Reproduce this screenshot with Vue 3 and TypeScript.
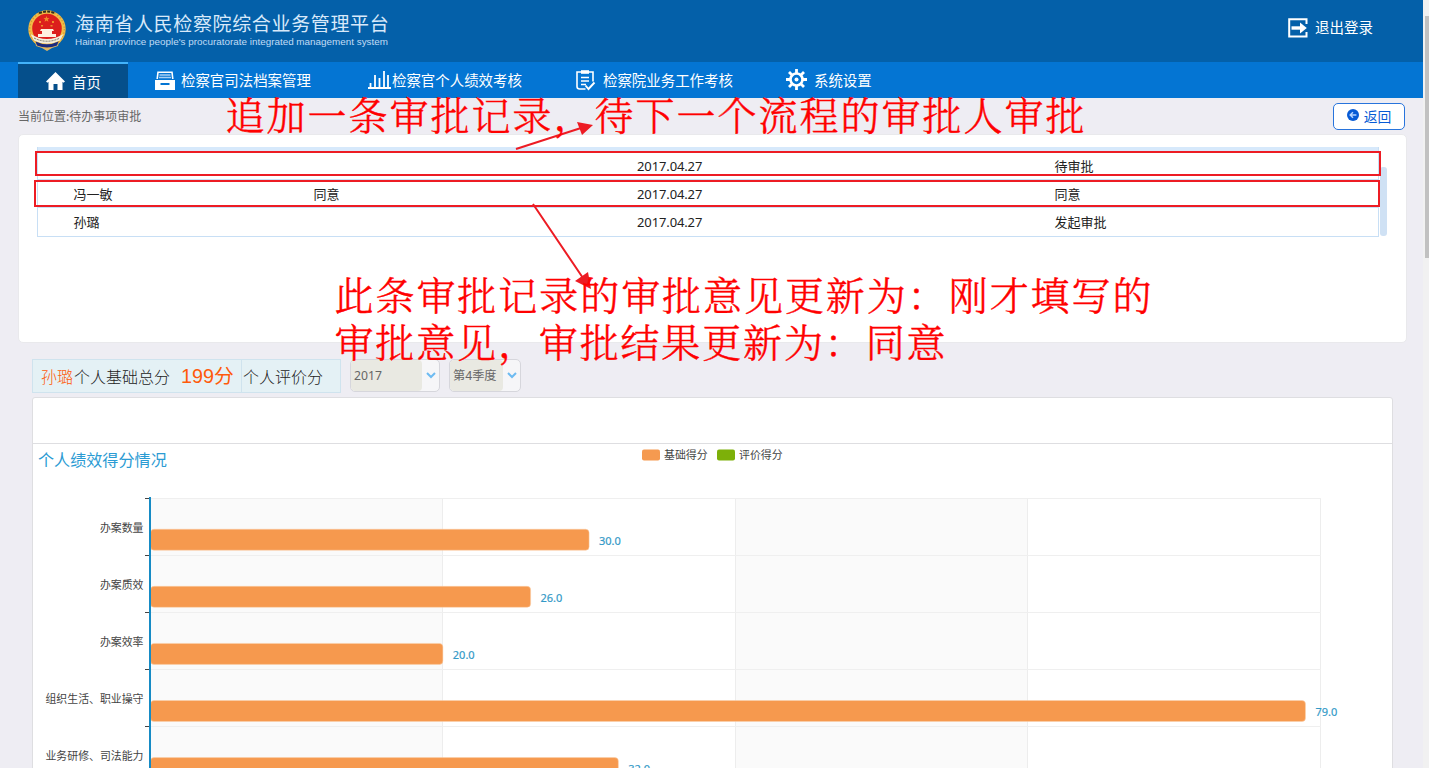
<script setup lang="ts">
interface Bar { label: string; value: number; y: number }

const approvals = [
  { name: '', opinion: '', date: '2017.04.27', result: '待审批' },
  { name: '冯一敏', opinion: '同意', date: '2017.04.27', result: '同意' },
  { name: '孙璐', opinion: '', date: '2017.04.27', result: '发起审批' },
]

const labels: [string, number][] = [
  ['办案数量', 30],
  ['办案质效', 26],
  ['办案效率', 20],
  ['组织生活、职业操守', 79],
  ['业务研修、司法能力', 32],
]
const rowHeight = 57.1
const unit = 14.62
const bars: Bar[] = labels.map(([label, value], i) => ({ label, value, y: 54 + i * rowHeight }))
const lines = [0, 1, 2, 3, 4].map((i) => Math.round(54 + i * rowHeight) + 0.5)
</script>

<template>
  <div class="page">
    <div class="main">
      <header class="top">
        <svg class="emblem" width="40" height="42" viewBox="0 0 40 42">
          <path d="M7 27 L9 36 L15 38 L20 41 L25 38 L31 36 L33 27Z" fill="#e0b563" />
          <circle cx="20" cy="19" r="18.7" fill="#f2bd45" />
          <circle cx="20" cy="19" r="17.3" fill="none" stroke="#d39a3a" stroke-width="1.4" stroke-dasharray="1.4 2" />
          <path d="M12 3.2Q20 -.2 28 3.2" fill="none" stroke="#37301c" stroke-width="2" stroke-dasharray="3 1.2" />
          <circle cx="20" cy="18.5" r="14.8" fill="#dc1f1c" />
          <path d="m19.5 6 .8 2.1 2.2.1-1.7 1.4.6 2.2-1.9-1.2-1.9 1.2.6-2.2-1.7-1.4 2.2-.1z" fill="#f08a2b" />
          <path d="M12 11h2v2h-2zM25 11h2v2h-2zM14 15h2v1.6h-2zM23.5 15h2v1.6h-2z" fill="#f08a2b" />
          <path d="M14 19h12l1 2H13zM15 21h10v3h4v3H11v-3h4z" fill="#fff0df" />
          <path d="M3.5 24Q20 34 36.5 24L33 30.5Q20 37 7 30.5Z" fill="#f4eedb" />
          <path d="M7 28Q20 34.5 33 28" fill="none" stroke="#7b7569" stroke-dasharray="2 1" />
          <path d="M8.5 31.5Q20 37 31.5 31.5L30 35.5Q20 39.5 10 35.5Z" fill="#1c2b80" />
        </svg>
        <div class="brand">
          <h1>海南省人民检察院综合业务管理平台</h1>
          <svg class="english" width="316" height="14">
            <text x="0" y="8.5" textLength="313" lengthAdjust="spacingAndGlyphs">Hainan province people's procuratorate integrated management system</text>
          </svg>
        </div>
        <a class="logout">
          <svg width="20" height="20" viewBox="0 0 20 20" fill="none" stroke="#fff" stroke-width="2">
            <path d="M18.5 6V1.2H1.2v17.2h17.3V14" />
            <path d="M3.5 10H13" stroke-width="3.4" />
            <path d="M12 4.5 18.8 10 12 15.5z" fill="#fff" stroke="none" />
          </svg>
          <span>退出登录</span>
        </a>
      </header>

      <nav>
        <a class="tab home">
          <svg width="19" height="19" viewBox="0 0 19 19"><path d="M9.5 0 19 9.5l-1.5 1.3-1-1V18h-5v-6h-4v6h-5V9.8l-1 1L0 9.5z" fill="#fff" /></svg>
          <span>首页</span>
        </a>
        <a class="tab archive">
          <svg width="20" height="20" viewBox="0 0 20 20">
            <path d="M2.2 8 3 1.2h14L17.8 8" fill="none" stroke="#fff" stroke-width="1.6" />
            <path d="M4.5 4h11M4 6.5h12" stroke="#a9d0f3" stroke-width="1.3" />
            <path d="M0 9h20v10H0z" fill="#fff" /><path d="M5.5 12h9v2h-9z" fill="#0475d3" />
          </svg>
          <span>检察官司法档案管理</span>
        </a>
        <a class="tab personal">
          <svg width="23" height="18" viewBox="0 0 23 18"><path d="M0 17h23M2.5 17v-5M7 17V4M11.5 17V7M16 17V0M20 17V4" fill="none" stroke="#fff" stroke-width="1.8" /></svg>
          <span>检察官个人绩效考核</span>
        </a>
        <a class="tab work">
          <svg width="20" height="21" viewBox="0 0 20 21" fill="none" stroke="#fff" stroke-width="1.6">
            <path d="M9.5 19H3.7Q1 19 1 16.5V2h16v9.5" /><path d="M5 2h8" stroke-width="3.6" />
            <path d="M5 7.5h8M5 11h8M5 14.5h5" stroke-width="1.4" /><path d="m9.5 15.5 3 3.5 6-6.5" stroke-width="1.9" />
          </svg>
          <span>检察院业务工作考核</span>
        </a>
        <a class="tab settings">
          <svg width="21" height="21" viewBox="0 0 21 21" fill="none" stroke="#fff">
            <circle cx="10.5" cy="10.5" r="6" stroke-width="2.6" />
            <path d="M10.5 0v4M10.5 17v4M0 10.5h4M17 10.5h4M3 3l3 3M15 15l3 3M18 3l-3 3M6 15l-3 3" stroke-width="2.8" />
            <circle cx="10.5" cy="10.5" r="2" fill="#fff" stroke="none" />
          </svg>
          <span>系统设置</span>
        </a>
      </nav>

      <div class="crumb">
        <span>当前位置:待办事项审批</span>
        <button>
          <svg width="12" height="12" viewBox="0 0 12 12"><circle cx="6" cy="6" r="6" fill="#075bd5" /><path d="M9.4 6H3.5M6 3.2 3.2 6 6 8.8" fill="none" stroke="#b7d5ff" stroke-width="1.5" /></svg>
          <span>返回</span>
        </button>
      </div>

      <section class="approval">
        <div class="table">
          <div class="table-head"></div>
          <div v-for="(row, i) in approvals" :key="i" class="row">
            <span>{{ row.name }}</span><span>{{ row.opinion }}</span><span class="date">{{ row.date }}</span><span>{{ row.result }}</span>
          </div>
        </div>
        <div class="inner-scroll"></div>
      </section>

      <div class="summary">
        <div class="score">
          <div class="base"><em>孙璐</em>个人基础总分<strong>199分</strong></div>
          <div class="rating">个人评价分</div>
        </div>
        <div class="select year"><span>2017</span><i><svg width="10" height="7" viewBox="0 0 10 7"><path d="m1 1 4 4 4-4" /></svg></i></div>
        <div class="select quarter"><span>第4季度</span><i><svg width="10" height="7" viewBox="0 0 10 7"><path d="m1 1 4 4 4-4" /></svg></i></div>
      </div>

      <section class="chart-card">
        <div class="chart-head"></div>
        <svg class="chart" width="1359" height="324" viewBox="0 0 1359 324">
          <text class="chart-title" x="5" y="21.5">个人绩效得分情况</text>
          <rect x="609" y="5.5" width="18" height="11" rx="2" fill="#f59a50" />
          <text class="label" x="631" y="15.3">基础得分</text>
          <rect x="684" y="5.5" width="18" height="11" rx="2" fill="#7db009" />
          <text class="label" x="706" y="15.3">评价得分</text>
          <rect x="118" y="54" width="292" height="270" fill="#fafafa" />
          <rect x="703" y="54" width="292" height="270" fill="#fafafa" />
          <path d="M409.5 54V324M702.5 54V324M994.5 54V324M1287.5 54V324" stroke="#ededed" />
          <g v-for="y in lines" :key="y">
            <path :d="`M118 ${y}H1288`" stroke="#efefef" />
            <path :d="`M112 ${y}H117`" stroke="#444" />
          </g>
          <g v-for="bar in bars" :key="bar.label">
            <rect x="117.5" :y="bar.y + 31.2" :width="bar.value * unit" height="21" rx="3.5" fill="#f6994e" stroke="#fad0ac" stroke-width=".5" />
            <text class="label" x="110.5" :y="bar.y + 33.5" text-anchor="end">{{ bar.label }}</text>
            <text class="value" :x="127.4 + bar.value * unit" :y="bar.y + 46.6">{{ bar.value.toFixed(1) }}</text>
          </g>
          <path d="M117 53V324" stroke="#168bc5" stroke-width="2" />
        </svg>
      </section>

      <svg class="notes" width="1423" height="400" viewBox="0 0 1423 400">
        <g fill="none" stroke="#ed1c24" stroke-width="2">
          <rect x="36" y="152" width="1344" height="23" />
          <rect x="35" y="181" width="1344" height="25" />
          <path d="M516 149 581 128M533 204 585 281" />
        </g>
        <path d="M593 125 577 122 582 135zM591 289 575 281 588 272z" fill="#ed1c24" />
        <g class="note">
          <text x="225.5" y="129.5" textLength="859">追加一条审批记录，待下一个流程的审批人审批</text>
          <text x="334.5" y="309.5" textLength="817">此条审批记录的审批意见更新为：刚才填写的</text>
          <text x="334.5" y="357" textLength="611">审批意见，审批结果更新为：同意</text>
        </g>
      </svg>
    </div>
    <aside class="scrollbar"><div class="thumb"></div></aside>
  </div>
</template>

<style>
html, body { margin: 0; overflow: hidden; }
</style>

<style scoped>
.page { display: flex; width: 1429px; height: 768px; overflow: hidden; background: #eeedf3; font-family: "Noto Sans", "Noto Sans CJK SC", sans-serif; font-size: 13px; color: #222; }
.page * { box-sizing: border-box; }
.main { position: relative; width: 1423px; height: 768px; overflow: hidden; }
.top { height: 62px; display: flex; align-items: flex-start; background: #0460a9; color: #fff; padding-left: 27px; }
.emblem { margin-top: 10px; }
.brand { margin-left: 8px; padding-top: 10px; }
h1 { margin: 0; font-family: "Noto Sans CJK SC", sans-serif; font-size: 19px; font-weight: 400; line-height: 26px; letter-spacing: .65px; white-space: nowrap; color: #d8e9fa; }
.english { display: block; }
.english text { font: 9.5px "Liberation Sans", sans-serif; fill: #c1dcf5; }
.logout { margin: 17px 50px 0 auto; display: flex; gap: 7px; align-items: center; font: 14.5px/20px "Noto Sans CJK SC", sans-serif; }
.logout span { padding-bottom: 1px; }
nav { height: 36px; display: flex; background: #0475d3; padding-left: 18px; color: #fff; }
.tab { display: flex; align-items: center; white-space: nowrap; font: 14.45px/20px "Noto Sans CJK SC", sans-serif; }
.tab svg { flex: none; }
.tab span { padding-bottom: 1px; }
.home { width: 110px; background: #054f8b; border-top: 2px solid #43b3fa; padding: 2px 0 0 28px; gap: 7px; }
.home svg { margin-bottom: 1px; }
.home span { padding-bottom: 0; }
.archive { width: 213px; padding: 1px 0 0 27px; gap: 6px; }
.personal { width: 209px; padding: 0 0 1px 27px; gap: 1px; }
.personal span, .settings span { padding-bottom: 0; }
.work { width: 209px; padding: 1px 0 0 26px; gap: 7px; }
.settings { padding: 0 0 1px 27px; gap: 7px; }
.crumb { height: 36px; display: flex; align-items: center; justify-content: space-between; padding: 0 18px; color: #666; font-family: "Noto Sans CJK SC", sans-serif; font-size: 12px; }
.crumb > span { padding-bottom: 1px; }
.crumb button { width: 72px; height: 27px; display: flex; align-items: center; justify-content: center; gap: 5px; border: 1px solid #2874dc; border-radius: 5px; background: #fff; color: #075bd5; font: 13.8px "Noto Sans CJK SC", sans-serif; padding: 0; }
.crumb button svg { margin-bottom: 2px; }
.approval { display: flex; margin-left: 18px; width: 1389px; height: 209px; background: #fff; border: 1px solid #e9e9ec; border-radius: 5px; padding: 12px 0 0 18px; }
.table { width: 1342px; height: 90px; border: 1px solid #c8dff5; border-top: 0; }
.table-head { height: 4px; background: #d7e9fb; }
.row { height: 28px; display: grid; grid-template-columns: 240px 323.5px 417.5px 1fr; align-items: center; padding: 1px 0 0 35.5px; border-top: 1px solid #c8e1f7; font-size: 13px; line-height: 18px; }
.row:last-child { height: 29px; padding-bottom: 1px; }
.date { letter-spacing: -.12px; }
.inner-scroll { width: 7px; height: 69px; margin: 20px 0 0 1px; border-radius: 3px; background: #cfe1f4; }
.summary { display: flex; margin: 16px 0 0 32px; height: 34px; }
.score { display: flex; width: 309px; background: #e4f1f5; border: 1px solid #cfe3ee; font: 16px/32px "Noto Sans CJK SC", sans-serif; font-weight: 300; white-space: nowrap; }
.base { width: 209px; padding-left: 8px; border-right: 1px solid #cfe3ee; display: flex; }
.base em { color: #ff5a0a; font-style: normal; margin-right: 1px; }
.base strong { color: #ff5a0a; margin-left: 11px; font: 19.8px/32px "Liberation Sans", "Noto Sans CJK SC", sans-serif; }
.rating { padding-left: 1px; }
.select { display: flex; height: 33px; border: 1px solid #d6d6dc; border-radius: 5px; background: #f6f6f8; color: #666; font-size: 12.2px; line-height: 31px; overflow: hidden; }
.select span { background: #e9e9e2; border-radius: 4px; padding-left: 3px; white-space: nowrap; }
.select i { flex: 1; display: flex; align-items: center; justify-content: center; }
.select path { fill: none; stroke: #6dbbf2; stroke-width: 2; }
.year { width: 90px; margin-left: 9px; }
.year span { width: 71px; }
.quarter { width: 72px; margin-left: 9px; }
.quarter span { width: 53px; }
.chart-card { width: 1361px; height: 390px; margin: 4px 0 0 32px; background: #fff; border: 1px solid #dedee1; border-radius: 3px; }
.chart-head { height: 46px; border-bottom: 1px solid #dedee1; }
.chart { display: block; }
.chart-title { font: 16.1px "Noto Sans CJK SC", sans-serif; fill: #2b9bd3; }
.label { font: 10.9px "Noto Sans CJK SC", sans-serif; fill: #444; }
.value { font: 11px "Noto Sans", sans-serif; fill: #3399c7; stroke: #3399c7; stroke-width: .2; }
.notes { position: absolute; left: 0; top: 0; pointer-events: none; }
.note { font-family: "Noto Serif CJK SC", SimSun, "Noto Sans CJK SC", serif; font-size: 39px; font-weight: 300; fill: #f00; stroke: #f00; stroke-width: .45; }
.scrollbar { width: 6px; background: #f1f1f1; padding: 16px 0 0 2px; }
.thumb { height: 242px; background: #c1c1c1; }
</style>
